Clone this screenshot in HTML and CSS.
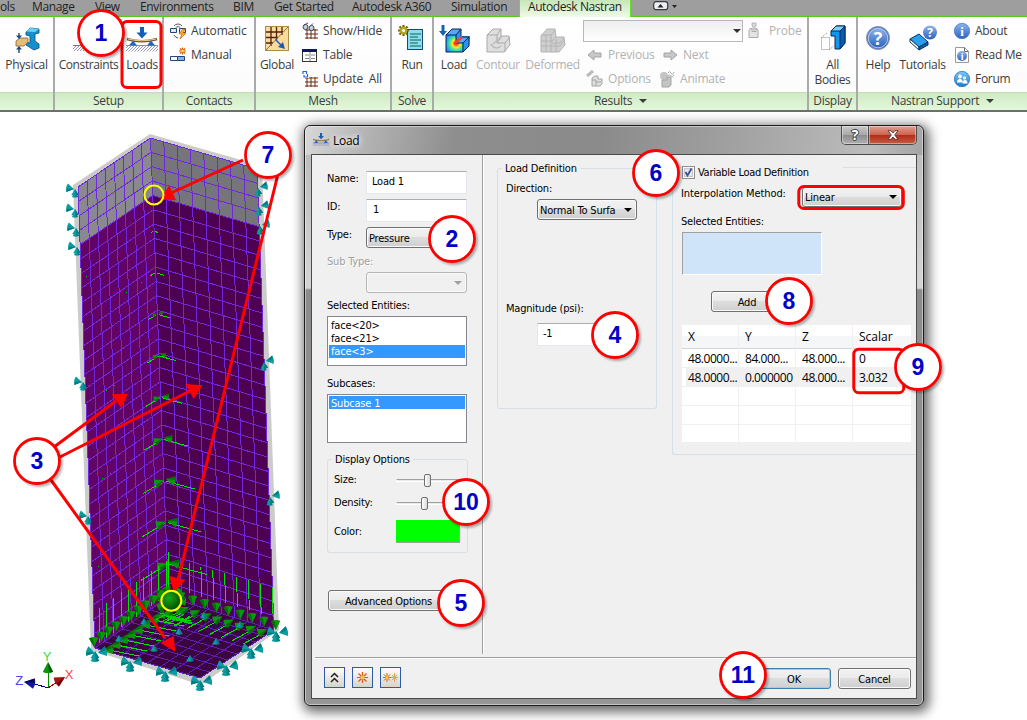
FILE: index.html
```html
<!DOCTYPE html>
<html lang="en">
  <head>
    <meta charset="UTF-8" />
    <meta name="viewport" content="width=device-width, initial-scale=1.0" />
    <title>Autodesk Nastran - Load</title>
    <link rel="stylesheet" href="styles.css">
  </head>
  <body>
    <svg class="defs" width="0" height="0">
      <defs>
        <linearGradient id="blue" x1="0" y1="0" x2="0" y2="1">
          <stop offset="0" stop-color="#8db4ee" />
          <stop offset="1" stop-color="#2c62bd" />
        </linearGradient>
        <linearGradient id="cyan" x1="0" y1="0" x2="0" y2="1">
          <stop offset="0" stop-color="#7cc8f4" />
          <stop offset="1" stop-color="#1c7cc8" />
        </linearGradient>
        <radialGradient id="rainbow" cx="0.6" cy="0.5" r="0.65">
          <stop offset="0.1" stop-color="#ff3c14" />
          <stop offset="0.35" stop-color="#ffe628" />
          <stop offset="0.6" stop-color="#3ce6a0" />
          <stop offset="1" stop-color="#1e8cff" />
        </radialGradient>
        <radialGradient id="ball" cx="0.4" cy="0.35" r="0.7">
          <stop offset="0" stop-color="#18a818" />
          <stop offset="1" stop-color="#004800" />
        </radialGradient>
        <pattern id="hatch" width="3" height="3" patternUnits="userSpaceOnUse">
          <path d="M0 3L3 0" stroke="#8888b4" stroke-width="0.9" />
        </pattern>
        <symbol id="load-icon" viewBox="0 0 32 26">
          <rect x="0" y="18.500" width="32" height="6" fill="url(#hatch)" />
          <path d="M0 18.500h32" stroke="#777" stroke-width="0.8" />
          <path d="M1 12q15 4.500 30 0" fill="none" stroke="#7a5520" stroke-width="2.600" />
          <path d="M2 12q14 3.500 28 0" fill="none" stroke="#e8cf98" stroke-width="1" />
          <path d="M7 13.500l-4 5h8zM25 13.500l-4 5h8z" fill="#1c66c8" />
          <path d="M14 0h4v5.500h3.500L16 11.500l-5.500-6H14z" fill="#155fb4" />
        </symbol>
      </defs>
    </svg>

    <div class="tabs">
      <span>ols</span>
      <span>Manage</span>
      <span>View</span>
      <span>Environments</span>
      <span>BIM</span>
      <span>Get Started</span>
      <span>Autodesk A360</span>
      <span>Simulation</span>
      <span class="active">Autodesk Nastran</span>
      <svg class="minimize" width="26" height="11" viewBox="0 0 26 11">
        <rect x="0.700" y="0.700" width="14" height="8" rx="2.500" fill="#eee" stroke="#333b44" stroke-width="1.200" />
        <path d="M4.500 6.500h6l-3-3.500z" fill="#222" />
        <path d="M19 4h5l-2.500 3z" fill="#222" />
      </svg>
    </div>

    <div class="ribbon">
      <div class="panel">
        <div class="tools">
          <div class="big">
            <svg width="32" height="32" viewBox="0 0 32 32">
              <path d="M15 7l4-4 9 1v4l-4 1v7l4 3v4l-5 2-8-5v-3l4 1v-7l-4-1z" fill="#1590cc" stroke="#0a4a78" stroke-width="0.800" />
              <path d="M19 3l9 1-4 3-9-0.500z" fill="#6cd2f4" />
              <path d="M5 16l4-3h8v4l-4 4H5z" fill="#e4bd78" stroke="#8a6428" stroke-width="0.800" />
              <path d="M8 8v4M8 28v-5" stroke="#124" stroke-width="1.200" />
              <path d="M5 10.500h6L8 14zM5 24.500h6L8 21z" fill="#124a90" />
            </svg>
            <span>Physical</span>
          </div>
        </div>
        <div class="name"></div>
      </div>

      <div class="panel">
        <div class="tools setup">
          <div class="big">
            <svg width="32" height="32" viewBox="0 0 32 32">
              <rect x="0" y="21" width="32" height="5" fill="url(#hatch)" />
              <path d="M0 20.500h32" stroke="#777" />
            </svg>
            <span>Constraints</span>
          </div>
          <div class="big">
            <svg width="32" height="32" viewBox="0 -2 32 32"><use href="#load-icon" width="32" height="26" /></svg>
            <span>Loads</span>
          </div>
        </div>
        <div class="name">Setup</div>
      </div>

      <div class="panel">
        <div class="tools contacts">
          <div class="list">
            <div class="small">
              <svg width="18" height="18" viewBox="0 0 18 18">
                <path d="M4 4a5 5 0 0 1 8 0M5.500 6a3 3 0 0 1 5 0M4 13a5 5 0 0 0 4 3" fill="none" stroke="#555" />
                <path d="M0.500 6.500h6v4h-6zM9.500 6.500h6v4h-6z" fill="#dce6f4" stroke="#1e4678" />
                <path d="M13 7l-4 5h3l-2 5 6-6h-3l2-4z" fill="#ffb428" stroke="#d06410" stroke-width="0.700" />
              </svg>
              <span>Automatic</span>
            </div>
            <div class="small">
              <svg width="18" height="18" viewBox="0 0 18 18">
                <path d="M0.500 10.500h7v4h-7z" fill="#fff" stroke="#1e4678" />
                <path d="M7.500 10.500h7v4h-7z" fill="#82b4e6" stroke="#1e4678" />
                <path d="M12.500 1.500v7M9 5h7M10 2.500l5 5M15 2.500l-5 5" stroke="#d25a00" stroke-width="1.200" />
                <circle cx="12.500" cy="5" r="1.500" fill="#ffdc50" />
              </svg>
              <span>Manual</span>
            </div>
          </div>
        </div>
        <div class="name">Contacts</div>
      </div>

      <div class="panel">
        <div class="tools mesh">
          <div class="big">
            <svg width="32" height="32" viewBox="0 0 32 32">
              <rect x="4.500" y="1.500" width="23" height="24" fill="#fbdc9c" stroke="#b08a48" />
              <path d="M5 7h17M5 12.500h12M5 18h7M10 2v19M15.500 2v13M21 2v8" stroke="#54200c" stroke-width="1.300" />
              <path d="M5 25L27 2" stroke="#8a7048" />
              <path d="M15 14l5 5 2-2 2 7-7-2 2-2-5-5z" fill="#1e5ab4" />
            </svg>
            <span>Global</span>
          </div>
          <div class="list">
            <div class="small">
              <svg width="18" height="18" viewBox="0 0 18 18">
                <path d="M3 8h13M3 12h13M3 16h13M5 7v10M9 7v10M13 7v10" stroke="#6a2c10" />
                <circle cx="3.500" cy="5" r="2.500" fill="#c8d2dc" stroke="#445" />
                <circle cx="9.500" cy="6" r="2.500" fill="#c8d2dc" stroke="#445" />
                <path d="M2 3l4-2M9 3.500l2-2" stroke="#445" />
              </svg>
              <span>Show/Hide</span>
            </div>
            <div class="small">
              <svg width="18" height="18" viewBox="0 0 18 18">
                <rect x="0.500" y="3.500" width="14" height="12" fill="#fff" stroke="#333" />
                <rect x="0" y="3" width="15" height="3" fill="#141464" />
                <path d="M3 9h4M9 9h4M3 12.500h4M9 12.500h4M8 6v9" stroke="#888" />
              </svg>
              <span>Table</span>
            </div>
            <div class="small">
              <svg width="18" height="18" viewBox="0 0 18 18">
                <path d="M3 8h13M3 12h13M3 16h13M5 7v10M9 7v10M13 7v10" stroke="#6a2c10" />
                <rect x="0" y="0" width="7" height="8" fill="#fff" />
                <path d="M1 4V1.500h3.500V4M5.500 4V7H2V5" fill="none" stroke="#2864e6" stroke-width="1.200" />
              </svg>
              <span>Update&nbsp; All</span>
            </div>
          </div>
        </div>
        <div class="name">Mesh</div>
      </div>

      <div class="panel">
        <div class="tools">
          <div class="big">
            <svg width="32" height="32" viewBox="0 0 32 32">
              <rect x="11.500" y="4.500" width="15" height="20" fill="#8cdcf4" stroke="#18486c" />
              <path d="M14 9h11M14 12h8M14 15h11M14 18h8M14 21h11" stroke="#0c6446" stroke-width="1.200" />
              <path d="M7.500 0v11M2 5.500h11M3.500 1.500l8 8M11.500 1.500l-8 8" stroke="#6e6400" stroke-width="2.200" />
              <circle cx="7.500" cy="5.500" r="3.800" fill="#b4a428" />
              <circle cx="7.500" cy="5.500" r="1.500" fill="#fff" />
            </svg>
            <span>Run</span>
          </div>
        </div>
        <div class="name">Solve</div>
      </div>

      <div class="panel">
        <div class="tools results">
          <div class="big">
            <svg width="32" height="32" viewBox="0 0 32 32">
              <path d="M8 10l6-6h9v7h9l-1 10-6 6H8z" fill="#2896f0" />
              <path d="M8 10h10v8h7v9H8z" fill="url(#rainbow)" />
              <path d="M8 10l6-6h9l-5 6zM18 18l5-6h9l-7 6z" fill="#50aaf8" />
              <path d="M8 10h10v8h7v9H8zM8 10l6-6h9v7M18 10l5-6M25 18l6-6h-7M25 27l6-6v-9M18 18l6-6" fill="none" stroke="#0a1e50" />
              <path d="M16 19l8-7" stroke="#ff3c28" stroke-width="2.500" />
              <path d="M3.500 0h3v6H9l-4 5-4-5h2.500z" fill="#1464b4" />
            </svg>
            <span>Load</span>
          </div>
          <div class="big disabled">
            <svg width="32" height="32" viewBox="0 0 32 32">
              <path d="M5 10l6-6h8v7h8l1 9-6 7H5z" fill="#dedede" stroke="#aaa" />
              <path d="M5 10h10v8h8v9M15 10l4-6M23 18l5-6M15 18l5-7" fill="none" stroke="#aaa" />
              <path d="M9 19a6 6 0 0 0 10 2M11 19l9-8" fill="none" stroke="#bbb" stroke-width="1.500" />
            </svg>
            <span>Contour</span>
          </div>
          <div class="big disabled">
            <svg width="32" height="32" viewBox="0 0 32 32">
              <path d="M4 11l6-7h8l1 8h8l1 8-6 7H4z" fill="#cfcfcf" stroke="#b4b4b4" />
              <path d="M4 16h11l4-4M4 21h19l4-5M9 9v18M14 9v18M19 14v13M4 10h10l4-5M15 18h8l4-5" fill="none" stroke="#b4b4b4" />
            </svg>
            <span>Deformed</span>
          </div>
          <div class="list">
            <div class="small disabled">
              <div class="combo"><i class="arrow"></i></div>
              <svg class="probe" width="18" height="18" viewBox="0 0 18 18">
                <path d="M5 1h4v3h-1v4h-2V4h-1z" fill="#ddd" stroke="#aaa" stroke-width="0.800" />
                <path d="M3 6.500l-1 2v7h9v-7l-1-2H9v3H5v-3z" fill="#e4e4e4" stroke="#aaa" />
              </svg>
              <span>Probe</span>
            </div>
            <div class="small pair disabled">
              <svg width="18" height="18" viewBox="0 0 18 18"><path d="M1 9l6-5v3h7v4H7v3z" fill="#c8c8c8" stroke="#a4a4a4" /></svg>
              <span>Previous</span>
              <svg width="18" height="18" viewBox="0 0 18 18"><path d="M15 9L9 4v3H2v4h7v3z" fill="#c8c8c8" stroke="#a4a4a4" /></svg>
              <span>Next</span>
            </div>
            <div class="small pair options disabled">
              <svg width="18" height="18" viewBox="0 0 18 18">
                <path d="M5 8l3-2h3v3h4v5l-2 2H5z" fill="#dedede" stroke="#a4a4a4" />
                <path d="M5 10h4v6M9 12h5" fill="none" stroke="#a4a4a4" />
                <path d="M0 6l6-5" stroke="#bbb" stroke-width="3" />
              </svg>
              <span>Options</span>
              <svg width="18" height="18" viewBox="0 0 18 18">
                <circle cx="5" cy="6" r="4" fill="#c4c4c4" />
                <path d="M3 10h5V7h4v8l-2 2H3z" fill="#c4c4c4" stroke="#a4a4a4" />
                <path d="M9 3q1.500-3 3 0t3-1M9 6q1.500-2 3 0t3-1" fill="none" stroke="#aaa" />
              </svg>
              <span>Animate</span>
            </div>
          </div>
        </div>
        <div class="name">Results <i class="arrow"></i></div>
      </div>

      <div class="panel">
        <div class="tools">
          <div class="big">
            <svg width="32" height="32" viewBox="0 0 32 32">
              <path d="M4.500 12.500h8v12h-8zM4.500 12.500l6-5M12.500 24.500l5-4" fill="none" stroke="#888" stroke-dasharray="1 1" />
              <path d="M14 6l5-5h9v17l-5 6h-5V11h-4z" fill="#0f96f0" stroke="#062a50" />
              <path d="M14 6l5-5h9l-5 5z" fill="#78d2ff" stroke="#062a50" />
              <path d="M23 6l5-5v17l-5 6z" fill="#0a5ab4" stroke="#062a50" />
            </svg>
            <span>All<br>Bodies</span>
          </div>
        </div>
        <div class="name">Display</div>
      </div>

      <div class="panel">
        <div class="tools support">
          <div class="big">
            <svg width="32" height="32" viewBox="0 0 32 32">
              <circle cx="16" cy="13" r="11.500" fill="#4870bc" stroke="#8c98b0" />
              <circle cx="16" cy="13" r="9.800" fill="url(#blue)" stroke="#d0dcf4" stroke-width="0.800" />
              <text x="16" y="19.500" class="glyph" font-size="18">?</text>
            </svg>
            <span>Help</span>
          </div>
          <div class="big">
            <svg width="32" height="32" viewBox="0 0 32 32">
              <path d="M3 14l9-5 9 8-9 5z" fill="#28a0ee" stroke="#083460" />
              <path d="M3 14l9 8v3l-9-8z" fill="#fff" stroke="#083460" />
              <path d="M12 25l9-5v-3l-9 5z" fill="#0c5ea8" stroke="#083460" />
              <circle cx="23" cy="7.500" r="7" fill="url(#blue)" />
              <text x="23" y="12" class="glyph" font-size="12">?</text>
            </svg>
            <span>Tutorials</span>
          </div>
          <div class="list">
            <div class="small">
              <svg width="18" height="18" viewBox="0 0 18 18">
                <circle cx="8" cy="9" r="7.700" fill="url(#blue)" stroke="#3478c0" stroke-width="0.700" />
                <text x="8" y="13.500" class="glyph serif" font-size="13">i</text>
              </svg>
              <span>About</span>
            </div>
            <div class="small">
              <svg width="18" height="18" viewBox="0 0 18 18">
                <path d="M1.500 1.500h9l4 4v11h-13z" fill="#fff" stroke="#999" />
                <path d="M10.500 1.500v4h4" fill="none" stroke="#666" />
                <circle cx="8" cy="10" r="5" fill="url(#blue)" />
                <text x="8" y="13.500" class="glyph serif" font-size="10">i</text>
              </svg>
              <span>Read Me</span>
            </div>
            <div class="small">
              <svg width="18" height="18" viewBox="0 0 18 18">
                <circle cx="8" cy="9" r="7.700" fill="url(#cyan)" stroke="#2c6cb0" stroke-width="0.700" />
                <circle cx="6" cy="6.500" r="1.900" fill="#fff" />
                <circle cx="10.500" cy="8" r="1.700" fill="#e4f4ff" />
                <path d="M3 12.500q0-3.500 3-3.500t2.500 3.500zM8.500 13.500q0-3.500 2.500-3.500t2.500 3.500z" fill="#fff" />
              </svg>
              <span>Forum</span>
            </div>
          </div>
        </div>
        <div class="name">Nastran Support <i class="arrow"></i></div>
      </div>
    </div>

    <div class="viewport">
      <svg id="model" width="304" height="608" viewBox="0 112 304 608"></svg>
    </div>

    <div class="dialog">
      <div class="titlebar">
        <svg width="17" height="17" viewBox="-1 0 32 30"><use href="#load-icon" width="32" height="28" /></svg>
        <span class="title">Load</span>
        <div class="window-buttons">
          <span class="help">
            <svg width="14" height="18" viewBox="0 0 14 18">
              <text x="7" y="14" class="outline">?</text>
            </svg>
          </span>
          <span class="close">
            <svg width="12" height="10" viewBox="0 0 12 10">
              <path d="M1 0.700h3l2 2.300 2-2.300h3L7.700 5 11 9.300H8L6 7 4 9.300H1L4.300 5z" fill="#fff" stroke="#503434" stroke-width="0.900" />
            </svg>
          </span>
        </div>
      </div>
      <div class="client">
        <div class="columns">
          <div class="general">
            <div class="field"><label>Name:</label><div class="input">Load 1</div></div>
            <div class="field"><label>ID:</label><div class="input id">1</div></div>
            <div class="field"><label>Type:</label><div class="select">Pressure</div></div>
            <label class="off">Sub Type:</label>
            <div class="select empty"><i class="arrow"></i></div>
            <label>Selected Entities:</label>
            <div class="listbox entities">
              <div>face&lt;20&gt;</div>
              <div>face&lt;21&gt;</div>
              <div class="selected">face&lt;3&gt;</div>
            </div>
            <label>Subcases:</label>
            <div class="listbox subcases">
              <div class="selected">Subcase 1</div>
            </div>
            <fieldset class="display">
              <legend>Display Options</legend>
              <div class="option"><label>Size:</label><div class="slider size"><i></i></div></div>
              <div class="option"><label>Density:</label><div class="slider density"><i></i></div></div>
              <div class="option"><label>Color:</label><div class="swatch"></div></div>
            </fieldset>
            <div class="button advanced">Advanced Options</div>
          </div>

          <div class="definition">
            <fieldset>
              <legend>Load Definition</legend>
              <label>Direction:</label>
              <div class="select">Normal To Surfa<i class="arrow"></i></div>
              <label>Magnitude (psi):</label>
              <div class="input">-1</div>
            </fieldset>
          </div>

          <div class="variable">
            <fieldset>
              <legend>
                <svg width="13" height="13" viewBox="0 0 13 13">
                  <rect x="0.500" y="0.500" width="12" height="12" fill="#fafafa" stroke="#8e8f8f" />
                  <rect x="2.500" y="2.500" width="8" height="8" fill="#e4e8ee" stroke="#c4c8ce" />
                  <path d="M3.500 6l2 3.500 4-7" fill="none" stroke="#3c4e94" stroke-width="1.800" />
                </svg>
                <span>Variable Load Definition</span>
              </legend>
              <div class="method">
                <label>Interpolation Method:</label>
                <div class="select">Linear<i class="arrow"></i></div>
              </div>
              <label>Selected Entities:</label>
              <div class="picked"></div>
              <div class="button add">Add</div>
              <div class="points">
                <div class="row head"><span>X</span><span>Y</span><span>Z</span><span>Scalar</span></div>
                <div class="row"><span>48.0000...</span><span>84.000...</span><span>48.000...</span><span>0</span></div>
                <div class="row current"><span>48.0000...</span><span>0.000000</span><span>48.000...</span><span>3.032</span></div>
                <div class="row"><span></span><span></span><span></span><span></span></div>
                <div class="row"><span></span><span></span><span></span><span></span></div>
                <div class="row"><span></span><span></span><span></span><span></span></div>
              </div>
            </fieldset>
          </div>
        </div>

        <div class="footer">
          <div class="square">
            <svg width="19" height="19" viewBox="0 0 19 19"><path d="M6 9l3.500-3.500L13 9M6 14l3.500-3.500L13 14" fill="none" stroke="#222" stroke-width="1.500" /></svg>
          </div>
          <div class="square">
            <svg width="19" height="19" viewBox="0 0 19 19">
              <path d="M9.500 4v11M4 9.500h11M5.500 5.500l8 8M13.500 5.500l-8 8" stroke="#e85014" stroke-width="1.200" />
              <circle cx="9.500" cy="9.500" r="2" fill="#ffc83c" />
            </svg>
          </div>
          <div class="square">
            <svg width="19" height="19" viewBox="0 0 19 19">
              <path d="M6 5v9M2 9.500h8M3 6.500l6 6M9 6.500l-6 6" stroke="#e85014" />
              <path d="M13.500 5v9M10 9.500h7M11 7l5 5M16 7l-5 5" stroke="#f0a050" />
              <circle cx="6" cy="9.500" r="1.500" fill="#ffc83c" />
            </svg>
          </div>
          <div class="button ok">OK</div>
          <div class="button">Cancel</div>
        </div>
      </div>
    </div>

    <svg class="notes" id="notes" width="1027" height="720" viewBox="0 0 1027 720">
      <g class="frames">
        <rect x="122" y="21.500" width="39" height="66" rx="5" />
        <rect x="798.800" y="186.500" width="104.500" height="22" rx="5" />
        <rect x="853.800" y="349.200" width="50" height="43.500" rx="5" />
      </g>
      <g class="arrows">
        <path d="M243 160L171 193M277.500 176L178 580M54 447L116 401M58 458L190 391M51 480L165 638" />
        <path class="heads" d="M160 199.300l9.300-14 6.700 15zM174 592l-5-16 16.300 4zM128 393.700l-16.300.6 9.600 14zM202.300 385.300l-17-1.300 8.400 15zM175.300 651.700l-15-9 13.400-6.700z" />
      </g>
      <circle class="marker" cx="154" cy="195" r="9.500" />
      <circle class="marker" cx="171.300" cy="600.700" r="10" />
    </svg>
    <script src="script.js"></script>
  </body>
</html>
```
FILE: styles.css
```css
* {
  margin: 0;
  padding: 0;
  box-sizing: border-box;
}
body {
  width: 1027px;
  height: 720px;
  overflow: hidden;
  position: relative;
  background: #fff;
  color: #000;
  font: 11px/14px "DejaVu Sans Condensed", "DejaVu Sans", sans-serif;
  font-stretch: condensed;
  letter-spacing: -0.2px;
  white-space: nowrap;
}
svg {
  display: block;
  flex: none;
  overflow: visible;
}
.defs {
  position: absolute;
}
.arrow {
  display: inline-block;
  border: 4px solid transparent;
  border-top-color: currentColor;
  border-bottom: 0;
}

/* ribbon */
.tabs {
  display: grid;
  grid-template-columns: 32px 63px 45px 93px 41px 78px 99px 68px 112px auto;
  height: 17px;
  background: #9e9e9e;
  border-bottom: 1px solid #58c81c;
  color: #1e1e1e;
  font: 12px/14px "Open Sans", "Noto Sans", sans-serif;
  letter-spacing: -0.35px;
}
.tabs .active {
  height: 17px;
  background: linear-gradient(#c6e6b8, #eefbe8);
  border: 1px solid #60e020;
  border-top: 0;
  border-bottom: 0;
  padding-left: 8px;
  letter-spacing: -0.42px;
}
.tabs .minimize {
  margin: 1px 0 0 22px;
}
.ribbon {
  display: grid;
  grid-template-columns: 55px 109px 92px 136px 42px 375px 49px 1fr;
  height: 95px;
  border-bottom: 2px solid #6e6e6e;
  color: #3c3c3c;
  font: 12px/15px "Open Sans", "Noto Sans", sans-serif;
  letter-spacing: -0.3px;
}
.panel {
  border-right: 2px solid #a8aca8;
  display: flex;
  flex-direction: column;
}
.panel:last-child {
  border-right: 0;
}
.tools {
  height: 75px;
  display: grid;
  background: linear-gradient(#fff, #fcfcfc);
}
.panel .name {
  height: 18px;
  line-height: 16px;
  text-align: center;
  background: linear-gradient(#d0eac4, #e2f8da);
  border-top: 1px solid #c4d8bc;
}
.name .arrow {
  margin: 0 0 2px 4px;
}
.setup {
  grid-template-columns: 67px 40px;
}
.contacts {
  padding-left: 6px;
}
.mesh {
  grid-template-columns: 42px auto;
  column-gap: 4px;
}
.results {
  grid-template-columns: 40px 48px 61px auto;
}
.support {
  grid-template-columns: 40px 49px auto;
}
.support .list {
  padding-left: 7px;
}
.big {
  display: flex;
  flex-direction: column;
  align-items: center;
  text-align: center;
  padding-top: 8px;
  min-width: 0;
}
.setup .big:first-child {
  letter-spacing: -0.4px;
}
.list {
  padding-top: 2px;
  letter-spacing: -0.2px;
}
.support .list {
  letter-spacing: -0.3px;
}
.small {
  display: flex;
  align-items: center;
  gap: 3px;
  height: 24px;
}
.small span {
  line-height: 14px;
  padding-bottom: 1px;
}
.disabled {
  color: #b2b2b2;
}
.combo {
  width: 160px;
  height: 22px;
  border: 1px solid #b8b8b8;
  background: linear-gradient(#eee, #fff);
  color: #333;
  display: flex;
  align-items: center;
  justify-content: flex-end;
  padding-right: 1px;
}
.probe {
  margin: 0 1px;
}
.pair {
  display: grid;
  grid-template-columns: 18px 51px 18px auto;
  padding-left: 4px;
}
.options {
  grid-template-columns: 18px 48px 18px auto;
}
.glyph {
  fill: #fff;
  font-family: "Open Sans", sans-serif;
  font-weight: bold;
  text-anchor: middle;
}
.serif {
  font-family: "Liberation Serif", serif;
}

/* load dialog */
.dialog {
  position: absolute;
  left: 304px;
  top: 125px;
  width: 620px;
  height: 581px;
  border: 1px solid #1c1c1c;
  border-radius: 6px;
  padding: 0 6px 6px;
  background:
    linear-gradient(100deg, #d8d8d8 0, #b4b4b4 60px, #8e8e8e 150px, #8a8a8a 290px, #a0a0a0 420px, #bcbcbc 560px, #a4a4a4) 0 0 / 100% 29px no-repeat,
    linear-gradient(#b8b8b8, #d4d4d4 162px, #8c8c8c 164px, #969696);
  box-shadow: inset 0 0 0 1px rgba(255, 255, 255, 0.45), 2px 3px 12px 3px rgba(0, 0, 0, 0.6);
}
.titlebar {
  height: 28px;
  display: flex;
  align-items: center;
}
.titlebar > svg {
  margin-left: 1px;
}
.title {
  margin-left: 4px;
  font: 12px/15px "Open Sans", sans-serif;
  letter-spacing: -0.3px;
  text-shadow: 0 0 6px #fff, 0 0 6px #fff;
}
.window-buttons {
  display: flex;
  align-self: flex-start;
  margin-left: auto;
  height: 19px;
  border: 1px solid #4c4c4c;
  border-top: 0;
  border-radius: 0 0 5px 5px;
}
.window-buttons span {
  display: flex;
  align-items: center;
  justify-content: center;
  box-shadow: inset 0 0 0 1px rgba(255, 255, 255, 0.4);
}
.help {
  width: 27px;
  border-right: 1px solid #4c4c4c;
  border-radius: 0 0 0 4px;
  background: linear-gradient(#c8c8c8, #a8a8a8 50%, #8c8c8c 50%, #b0b0b0);
}
.close {
  width: 47px;
  border-radius: 0 0 4px 0;
  background: linear-gradient(#e0a090, #cc6450 48%, #b02c18 50%, #c85c40);
}
.outline {
  font: bold 14px "Open Sans", sans-serif;
  fill: #fff;
  stroke: #444;
  stroke-width: 1.8px;
  paint-order: stroke;
  text-anchor: middle;
}
.client {
  height: 545px;
  border: 1px solid #4a4a4a;
  background: #f0f0f0;
}
.columns {
  display: grid;
  grid-template-columns: 172px 175px 1fr;
  height: 502px;
}
label {
  display: block;
  height: 14px;
  line-height: 16px;
}
.general {
  height: 499px;
  padding: 16px 0 0 15px;
  border-right: 1px solid #fff;
  box-shadow: inset -1px 0 #a0a0a0;
}
.field {
  display: grid;
  grid-template-columns: 39px 101px;
  height: 22px;
  margin-bottom: 6px;
}
.input {
  height: 23px;
  padding: 3px 5px;
  background: #fff;
  border: 1px solid #e3e9ef;
  border-top-color: #abadb3;
}
.id {
  padding-left: 6px;
}
.select,
.button {
  height: 21px;
  border: 1px solid #707070;
  border-radius: 3px;
  background: linear-gradient(#f2f2f2, #ebebeb 48%, #dddddd 50%, #cfcfcf);
  box-shadow: inset 0 0 0 1px #fafafa;
}
.select {
  width: 100px;
  padding: 2px 4px 0 2px;
  line-height: 20px;
  display: flex;
  justify-content: space-between;
  align-items: center;
}
.select .arrow {
  margin-bottom: 2px;
}
.button {
  line-height: 21px;
  text-align: center;
}
.off {
  color: #a0a0a0;
  margin-top: -1px;
  text-shadow: 1px 1px #fff;
}
.empty {
  margin: 4px 0 5px 39px;
  width: 101px;
  background: #f0f0f0;
  border-color: #b4b6b8;
  color: #a0a0a0;
  justify-content: flex-end;
}
.listbox {
  width: 140px;
  margin-top: 4px;
  border: 1px solid #828790;
  background: #fff;
  padding: 2px 1px;
  line-height: 13px;
}
.listbox div {
  padding-left: 2px;
  height: 13px;
}
.listbox .selected {
  background: #3399ff;
  color: #fff;
}
.entities {
  height: 50px;
  margin-bottom: 10px;
}
.subcases {
  height: 49px;
  margin-bottom: 9px;
  padding-top: 1px;
}
.subcases .selected {
  line-height: 15px;
}
fieldset {
  border: 1px solid #d5dfe5;
  border-radius: 3px;
}
legend {
  height: 14px;
  line-height: 15px;
  padding: 0 3px;
}
.display {
  width: 141px;
  height: 101px;
  padding-top: 6px;
}
.display legend {
  margin-left: 4px;
}
.option {
  display: grid;
  grid-template-columns: 62px 64px;
  padding-left: 6px;
  height: 23px;
}
.slider {
  align-self: start;
  margin-top: 7px;
  height: 3px;
  border: 1px solid #fff;
  border-top-color: #a0a0a0;
  background: #e8eaea;
  display: flex;
  align-items: center;
}
.slider i {
  width: 7px;
  height: 13px;
  border: 1px solid #707070;
  border-radius: 2px;
  background: linear-gradient(90deg, #fff, #d8d8d8);
  flex: none;
}
.size i {
  margin-left: 27px;
}
.density i {
  margin-left: 24px;
}
.option:last-child {
  margin-top: 2px;
}
.option:last-child label {
  line-height: 23px;
}
.swatch {
  width: 64px;
  height: 23px;
  background: #00ff00;
  border: 1px solid #a0a0a0;
  border-width: 0 1px 1px 0;
}
.advanced {
  width: 121px;
  margin: 37px 0 0 1px;
}

.definition {
  padding: 6px 0 0 13px;
}
.definition fieldset {
  width: 160px;
  height: 248px;
  padding: 6px 0 0 8px;
}
.definition legend {
  margin-left: -4px;
}
.definition .select {
  margin: 4px 0 81px 31px;
}
.definition .input {
  width: 100px;
  margin: 8px 0 0 31px;
}

.variable {
  padding: 5px 0 0 13px;
}
.variable fieldset {
  height: 295px;
  border-right: 0;
  border-radius: 3px 0 0 3px;
  padding-left: 8px;
}
.variable legend {
  display: flex;
  gap: 3px;
  width: 161px;
  margin-left: 1px;
  padding: 6px 0 0 0;
  letter-spacing: -0.3px;
}
.variable legend span {
  line-height: 14px;
}
.method {
  display: grid;
  grid-template-columns: 121px 100px;
  padding-top: 13px;
  height: 40px;
}
.method label {
  line-height: 14px;
  letter-spacing: -0.1px;
}
.method .select {
  height: 20px;
}
.picked {
  width: 140px;
  height: 43px;
  margin: 4px 0 16px 1px;
  background: #cfe4f8;
  border: 1px solid #fff;
  border-top-color: #a0a0a0;
  border-left-color: #a0a0a0;
}
.add {
  width: 72px;
  margin-left: 30px;
}
.points {
  margin: 13px 0 0 1px;
  width: 230px;
  background: #fff;
  font: 12px/19px "Open Sans", "Noto Sans", sans-serif;
  letter-spacing: -0.45px;
}
.row {
  display: grid;
  grid-template-columns: 57px 57px 57px 59px;
  height: 19px;
  border-bottom: 1px solid #f0f0f0;
}
.row span {
  padding-left: 6px;
  border-right: 1px solid #f0f0f0;
}
.row:last-child {
  height: 17px;
  border-bottom: 0;
}
.head {
  height: 24px;
  line-height: 24px;
  letter-spacing: 0;
  background: linear-gradient(#fff 50%, #f5f6f8 50%);
  border-color: #d5d5d5;
}
.current {
  background: linear-gradient(90deg, #fff 4px, #f0f0f0 4px);
}
.footer {
  display: flex;
  margin: 0 0 0 3px;
  padding: 9px 5px 0 9px;
  height: 41px;
  border-top: 1px solid #a0a0a0;
  box-shadow: inset 0 1px #fff;
}
.square {
  width: 21px;
  height: 21px;
  margin-right: 7px;
  border: 1px solid #2c5ca8;
  background: linear-gradient(#fdfdfb, #d8d4c8);
}
.footer .button {
  width: 73px;
  margin-top: 1px;
}
.footer .ok {
  width: 74px;
  margin-left: auto;
  border-color: #3c7fb1;
  box-shadow: inset 0 0 0 1px #8ad8f4;
}
.ok + .button {
  margin-left: 7px;
}

/* callouts */
.notes {
  position: absolute;
  left: 0;
  top: 0;
}
.frames rect {
  fill: none;
  stroke: #ff0000;
  stroke-width: 3px;
}
.arrows path {
  fill: none;
  stroke: #ff0000;
  stroke-width: 3px;
}
.arrows .heads {
  fill: #ff0000;
  stroke: none;
}
.marker {
  fill: none;
  stroke: #ffff00;
  stroke-width: 2px;
}
.callout circle {
  fill: #fff;
  stroke: #ff0000;
  stroke-width: 2.8px;
  filter: drop-shadow(2px 2px 1px rgba(0, 0, 0, 0.3));
}
.callout text {
  fill: #0000c8;
  font: bold 23px "Liberation Sans", Arial, sans-serif;
  letter-spacing: 0;
  text-anchor: middle;
}
.axis {
  font: 13px "Liberation Sans", Arial, sans-serif;
  text-anchor: middle;
}
```
FILE: script.js
```js
const NS = 'http://www.w3.org/2000/svg';
const model = document.getElementById('model');
const notes = document.getElementById('notes');

const add = (parent, name, attrs, text) => {
  const el = document.createElementNS(NS, name);
  for (const key in attrs) el.setAttribute(key, attrs[key]);
  if (text) el.textContent = text;
  parent.appendChild(el);
  return el;
};
const mix = (a, b, t) => [a[0] + (b[0] - a[0]) * t, a[1] + (b[1] - a[1]) * t];
const poly = (points, fill) => add(model, 'polygon', { points: points.join(' '), fill });
const line = (a, b, stroke, width = 1) =>
  add(model, 'path', {
    d: `M${a}L${b}`, stroke, 'stroke-width': width, 'shape-rendering': 'crispEdges',
  });

// box corners: left, back and right edges, top to bottom
const L = [[78, 187], [95, 648]];
const C = [[150.5, 138], [168.5, 597]];
const R = [[257, 169], [274, 630]];
const F = [200, 678];
const ROWS = 32;
const COLS = 8;

const grid = (a0, a1, b0, b1, rows, color) => {
  for (let i = 0; i <= rows; i++) line(mix(a0, a1, i / rows), mix(b0, b1, i / rows), color);
  for (let j = 0; j <= COLS; j++) line(mix(a0, b0, j / COLS), mix(a1, b1, j / COLS), color);
};

// a cone with its tip at (x, y) pointing along angle (degrees)
const cone = (x, y, angle, size, fill, dark, ratio = 0.52) => {
  const g = add(model, 'g', { transform: `translate(${x} ${y}) rotate(${angle})` });
  const w = size * ratio;
  add(g, 'path', { d: `M0 0L${-size} ${-w}Q${-size * 1.25} 0 ${-size} ${w}Z`, fill });
  add(g, 'path', { d: `M0 0L${-size} ${w}L${-size} ${w * 0.2}Z`, fill: dark });
};
const green = (x, y, angle, size) => cone(x, y, angle, size, '#0a960a', '#006e00');
const teal = (x, y, angle, size = 7) => cone(x, y, angle, size, '#0a9ca0', '#007c80', 0.62);

// outer shell
poly([[73, 185], [150, 134], [262, 166], [279, 630], [201, 685], [91, 650]], '#cbcbcb');

// faces
const split = 4 / ROWS;
const [l4, c4, r4] = [L, C, R].map((e) => mix(e[0], e[1], split));
poly([L[0], C[0], c4, l4], '#8a898f');
poly([C[0], R[0], r4, c4], '#77757c');
poly([l4, c4, C[1], L[1]], '#620466');
poly([c4, r4, R[1], C[1]], '#4e0052');
poly([L[1], C[1], R[1], F], '#3c0440');
grid(L[0], L[1], C[0], C[1], ROWS, '#7028dc');
grid(C[0], C[1], R[0], R[1], ROWS, '#7028dc');
grid(L[1], C[1], F, R[1], COLS, '#5a20b4');

// pressure arrows growing with depth
for (let i = 0; i < 9; i++) {
  const x = 154 + i * 1.8;
  const y = 231.500 + i * 41.600;
  const s = Math.min(9, 1 + i * 1.300);
  line([x - 1, y], [x - 3 - i * 3.100, y + 1 + i * 1.900], '#00e400');
  line([x + 1, y], [x + 4 + i * 4.300, y + 1 + i * 1.150], '#00e400');
  if (i > 1) {
    green(x - 1, y - 1, -25, s);
    green(x + 1, y - 2, 192, s);
  }
}
[[86, 276], [141, 282], [126, 292], [106, 390], [114, 385], [102, 478], [110, 473], [98, 566]].forEach(([x, y]) =>
  add(model, 'rect', { x, y, width: 1, height: 1, fill: '#00c800' })
);

// arrows along the lower edges
for (let i = 0; i < 10; i++) {
  const [x, y] = mix([94, 647], [161, 600], i / 9);
  line([x + 5, y - 4], [x + 5, y - 39], '#00e400');
  green(x, y, 88, 9);
}
for (let i = 0; i < 9; i++) {
  const [x, y] = mix([180, 599], [275, 627], i / 8);
  if (i < 8) line([x + 10, y - 6], [x + 9, y - 36], '#00e400');
  green(x + 1, y + 3, 88, 9);
}
for (let i = 0; i < 8; i++) {
  const [x, y] = mix([103, 651], [155, 616], i / 7);
  line([x + 6, y - 1], [x + 36, y + 5], '#00e400');
  green(x, y, 170, 9);
}
for (let i = 0; i < 8; i++) {
  const [x, y] = mix([187, 607], [265, 629], i / 7);
  line([x - 2, y + 4], [x - 22, y + 15], '#00e400');
  green(x + 2, y, -28, 9);
}
for (let i = 0; i < 4; i++) {
  line([160 + i * 4, 613 + i * 2], [184 + i * 4, 619 + i * 2], '#00d000');
  line([172 + i * 6, 610 + i * 2], [156 + i * 6, 620 + i * 2], '#00d000');
}
line([168, 552], [168, 590], '#00e400');
[0, 50, 100, 150, 200, 250, 300].forEach((a) => {
  const r = (a * Math.PI) / 180;
  green(171 + Math.cos(r) * 5, 601 + Math.sin(r) * 5, a + 180, 9);
});
add(model, 'circle', { cx: 171, cy: 601, r: 10, fill: 'url(#ball)' });

// constraints
[[70, 189], [70, 209], [71, 228], [72, 247], [78, 382], [83, 516]].forEach(([x, y]) => {
  teal(x + 4, y, 10, 7);
  teal(x + 5, y, -90, 6);
  teal(x + 5, y + 3, -90, 5);
});
[[264, 187], [265, 206], [266, 225], [270, 361], [276, 496]].forEach(([x, y]) => {
  teal(x - 4, y, 170, 7);
  teal(x - 6, y + 1, -95, 6);
  teal(x - 6, y + 4, -85, 5);
});
[[95, 653], [130, 663], [165, 673], [200, 682], [226, 667], [251, 650], [276, 633]].forEach(([x, y]) => {
  teal(x, y, 15, 8);
  teal(x + 3, y, 167, 8);
  teal(x, y - 2, -90, 7);
  teal(x, y + 1, -90, 7);
});
[[144, 618], [119, 635], [154, 645], [179, 628], [190, 655], [216, 638], [204, 612], [240, 621]].forEach(([x, y]) =>
  teal(x, y, -90, 6)
);

// axis triad
line([48, 688], [48, 670], '#008c00');
line([48, 688], [35, 684], '#0000a0');
line([48, 688], [57, 682], '#a00000');
cone(48, 662, -90, 10, '#0a960a', '#005a00');
cone(24, 682, 190, 10, '#1414a0', '#000064');
cone(65, 677, -30, 10, '#a81414', '#6e0000');
add(model, 'text', { x: 47, y: 661, class: 'axis', fill: '#3cdc3c' }, 'Y');
add(model, 'text', { x: 19, y: 685, class: 'axis', fill: '#4646f0' }, 'Z');
add(model, 'text', { x: 69, y: 679, class: 'axis', fill: '#f04646' }, 'X');

// numbered callouts
const callouts = {
  1: [101, 33], 2: [452, 239], 3: [37, 461], 4: [615, 335], 5: [461, 603], 6: [656, 173],
  7: [268, 155], 8: [789, 301], 9: [918, 367], 10: [466, 502], 11: [743, 675],
};
for (const n in callouts) {
  const [x, y] = callouts[n];
  const g = add(notes, 'g', { class: 'callout' });
  add(g, 'circle', { cx: x, cy: y, r: 22.500 });
  add(g, 'text', { x, y: y + 8 }, n);
}
```
